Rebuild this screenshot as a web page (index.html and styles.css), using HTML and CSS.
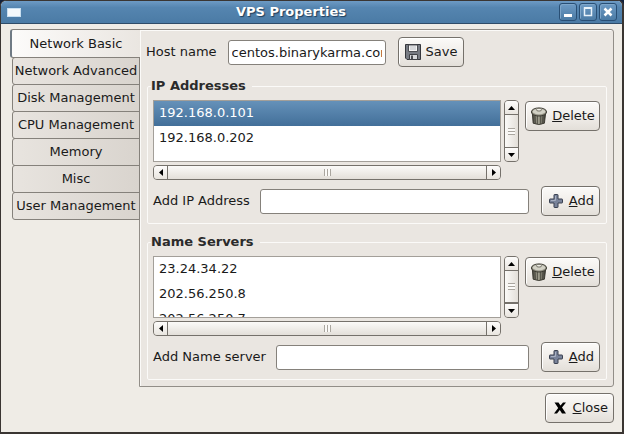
FILE: index.html
```html
<!doctype html>
<html lang="en">
<head>
    <meta charset="UTF-8">
    <meta name="viewport" content="width=device-width, initial-scale=1.0">
    <title>VPS Properties</title>
    <link rel="stylesheet" href="styles.css">
</head>
<body>

<!-- Icons used more than once -->
<svg class="icon-defs" aria-hidden="true">
    <defs>
        <linearGradient id="can" x1="0" x2="1" y1="0" y2="0">
            <stop offset="0" stop-color="#3c3b34"/>
            <stop offset=".45" stop-color="#aeac9b"/>
            <stop offset="1" stop-color="#36352e"/>
        </linearGradient>
    </defs>
    <symbol id="icon-trash" viewBox="0 0 20 20">
        <path d="M2.500 6 L3.500 18 Q10 21 16 18 L17.500 6Z" fill="url(#can)" stroke="#35342d"/>
        <path d="M5.500 9.500l.5 8.500M8.500 10v9M11.500 10v9M14.500 9.500l-.5 8.500" fill="none" stroke="#4a483f"/>
        <ellipse cx="10" cy="5.500" rx="8.500" ry="4.500" fill="#8d8b7e" stroke="#35342d"/>
        <ellipse cx="10" cy="5" rx="7" ry="3.300" fill="#d2d1c5"/>
        <ellipse cx="10" cy="3" rx="3" ry="1.500" fill="#f0efe8" stroke="#6b695d"/>
    </symbol>
    <symbol id="icon-add" viewBox="0 0 18 18">
        <path d="M7.500 2.500h3q.5 0 .5.5v4h4q.5 0 .5.500v3q0 .5-.5.500h-4v4q0 .5-.5.500h-3q-.5 0-.5-.5v-4H3q-.5 0-.5-.5v-3Q2.500 7 3 7h4V3q0-.5.5-.5z" fill="#79839a" stroke="#3a4150"/>
        <path d="M8.500 4v4.500H4" fill="none" stroke="#a9b1c2"/>
    </symbol>
    <symbol id="arrow-up" viewBox="0 0 7 4"><path d="M3.500 0L7 4H0z"/></symbol>
    <symbol id="arrow-down" viewBox="0 0 7 4"><path d="M0 0h7L3.500 4z"/></symbol>
    <symbol id="arrow-left" viewBox="0 0 4 7"><path d="M4 0v7L0 3.500z"/></symbol>
    <symbol id="arrow-right" viewBox="0 0 4 7"><path d="M0 0l4 3.500L0 7z"/></symbol>
</svg>

<div class="window">
    <header class="titlebar">
        <span class="window-icon"></span>
        <h1>VPS Properties</h1>
        <div class="window-buttons">
            <button aria-label="Minimize"><svg viewBox="0 0 16 16"><path d="M4 11.500h8" stroke="#fff" stroke-width="3"/></svg></button>
            <button aria-label="Maximize"><svg viewBox="0 0 16 16"><path d="M4.500 4h7v7.500h-7z" fill="none" stroke="#e8f2fa" stroke-width="1.500"/><path d="M4 4h8" stroke="#e8f2fa" stroke-width="2"/></svg></button>
            <button aria-label="Close window"><svg viewBox="0 0 16 16"><path d="M4.500 4.500l7 7M11.500 4.500l-7 7" stroke="#fff" stroke-width="2.500"/></svg></button>
        </div>
    </header>

    <main class="content">
        <div class="tabs" role="tablist" aria-label="Settings">
            <button class="tab active" role="tab" aria-selected="true">Network Basic</button>
            <button class="tab" role="tab">Network Advanced</button>
            <button class="tab" role="tab">Disk Management</button>
            <button class="tab" role="tab">CPU Management</button>
            <button class="tab" role="tab">Memory</button>
            <button class="tab" role="tab">Misc</button>
            <button class="tab" role="tab">User Management</button>
        </div>

        <div class="panel" role="tabpanel" aria-label="Network Basic">
            <div class="host-row">
                <label for="hostName">Host name</label>
                <input type="text" id="hostName" value="centos.binarykarma.com">
                <button class="btn">
                    <svg class="icon" viewBox="0 0 18 18">
                        <path d="M1.500 1.500h15v15H3l-1.500-1.500z" fill="#777b83" stroke="#35373c"/>
                        <path d="M4.500 2h9v6.500h-9z" fill="#f4f4f4" stroke="#4b4d52"/>
                        <path d="M6 4h6M6 6h6" stroke="#b9bcc2"/>
                        <path d="M5.500 11.500h8v5h-8z" fill="#d7d9dc" stroke="#404247"/>
                        <path d="M7 12.500h2v3.500H7z" fill="#4b4d52"/>
                    </svg>
                    <span>Save</span>
                </button>
            </div>

            <!-- IP addresses -->
            <fieldset class="group">
                <legend>IP Addresses</legend>
                <div class="list-area">
                    <select class="list" size="2" aria-label="IP Addresses">
                        <option selected>192.168.0.101</option>
                        <option>192.168.0.202</option>
                    </select>
                    <div class="scroll-v">
                        <button aria-label="Scroll up"><svg class="arrow-v"><use href="#arrow-up"/></svg></button>
                        <div class="thumb"><span class="grip"></span></div>
                        <button aria-label="Scroll down"><svg class="arrow-v"><use href="#arrow-down"/></svg></button>
                    </div>
                    <button class="btn"><svg class="icon icon-large"><use href="#icon-trash"/></svg><span><u>D</u>elete</span></button>
                    <div class="scroll-h">
                        <button aria-label="Scroll left"><svg class="arrow-h"><use href="#arrow-left"/></svg></button>
                        <div class="thumb"><span class="grip"></span></div>
                        <button aria-label="Scroll right"><svg class="arrow-h"><use href="#arrow-right"/></svg></button>
                    </div>
                </div>
                <div class="add-row">
                    <label for="addIp">Add IP Address</label>
                    <input type="text" id="addIp">
                    <button class="btn"><svg class="icon"><use href="#icon-add"/></svg><span><u>A</u>dd</span></button>
                </div>
            </fieldset>

            <!-- Name servers -->
            <fieldset class="group">
                <legend>Name Servers</legend>
                <div class="list-area">
                    <select class="list" size="2" aria-label="Name Servers">
                        <option>23.24.34.22</option>
                        <option>202.56.250.8</option>
                        <option>202.56.250.7</option>
                    </select>
                    <div class="scroll-v">
                        <button aria-label="Scroll up"><svg class="arrow-v"><use href="#arrow-up"/></svg></button>
                        <div class="thumb short"><span class="grip"></span></div>
                        <button aria-label="Scroll down"><svg class="arrow-v"><use href="#arrow-down"/></svg></button>
                    </div>
                    <button class="btn"><svg class="icon icon-large"><use href="#icon-trash"/></svg><span><u>D</u>elete</span></button>
                    <div class="scroll-h">
                        <button aria-label="Scroll left"><svg class="arrow-h"><use href="#arrow-left"/></svg></button>
                        <div class="thumb"><span class="grip"></span></div>
                        <button aria-label="Scroll right"><svg class="arrow-h"><use href="#arrow-right"/></svg></button>
                    </div>
                </div>
                <div class="add-row">
                    <label for="addServer">Add Name server</label>
                    <input type="text" id="addServer">
                    <button class="btn"><svg class="icon"><use href="#icon-add"/></svg><span><u>A</u>dd</span></button>
                </div>
            </fieldset>
        </div>
    </main>

    <footer class="actions">
        <button class="btn">
            <svg class="icon" viewBox="0 0 18 18"><path d="M3.500 3.500h4l2 3 2.500-3h3L11 8.600l4 5.900h-4l-2.200-3.500-2.800 3.500H3l4.200-5.500z" fill="#000"/></svg>
            <span><u>C</u>lose</span>
        </button>
    </footer>
</div>

</body>
</html>
```
FILE: styles.css
```css
* {
    box-sizing: border-box;
}
body {
    margin: 0;
    background-color: #10203c;
    color: #1a1a1a;
    font-family: "DejaVu Sans", sans-serif;
    font-size: 13px;
    line-height: 16px;
}
button, input, select {
    font: inherit;
    color: inherit;
    margin: 0;
}
button {
    display: flex;
    align-items: center;
    justify-content: center;
    padding: 0;
}
.icon-defs {
    position: absolute;
    width: 0;
    height: 0;
}
.window {
    display: flex;
    flex-direction: column;
    min-height: 100vh;
    border: 1px solid #3a3532;
    border-right-width: 2px;
    border-bottom-width: 2px;
    border-radius: 6px 6px 0 0;
    background-color: #efece6;
    overflow: hidden;
}

/* Title bar */
.titlebar {
    display: grid;
    grid-template-columns: 16px 1fr 60px;
    align-items: center;
    height: 23px;
    padding: 0 3px 0 6px;
    border-bottom: 1px solid #2f4c68;
    background: linear-gradient(#6d9ac4, #5585b0 30%, #4b7ba5);
}
.titlebar h1 {
    margin: 0;
    color: #fff;
    font-size: 13px;
    text-align: center;
    text-shadow: 1px 1px 1px #1f3d5a;
}
.window-icon {
    width: 14px;
    height: 9px;
    border: 1px solid #c9dff0;
    background-color: #f4f8fb;
}
.window-buttons {
    display: flex;
    gap: 2px;
}
.window-buttons button {
    width: 18px;
    height: 18px;
    border: 1px solid #294f75;
    border-radius: 3px;
    background: linear-gradient(#6d9ac4, #4b7ba5);
    box-shadow: inset 1px 1px #7ea6ca;
}
.window-buttons svg {
    width: 16px;
    height: 16px;
}

/* Tabs */
.content {
    display: flex;
    align-items: stretch;
    padding: 5px 8px 0 9px;
}
.tabs {
    flex: none;
    width: 130px;
    margin-right: -1px;
    z-index: 1;
}
.tab {
    width: 128px;
    height: 28px;
    margin: -1px 0 0 2px;
    border: 1px solid #85817b;
    border-radius: 3px 0 0 3px;
    background: linear-gradient(90deg, #e8e4df, #d9d4ce);
    white-space: nowrap;
}
.tab.active {
    width: 130px;
    height: 29px;
    margin: 0;
    border-right: 0;
    border-left: 2px solid #6f7a84;
    background: linear-gradient(90deg, #fcfbfa, #eae6e1);
}
.panel {
    flex: 1;
    min-width: 0;
    padding: 7px 6px 6px;
    border: 1px solid #928e88;
    border-radius: 0 3px 3px 0;
    background-color: #eae6e1;
    box-shadow: inset 1px 1px #fbfaf8;
}

/* Controls */
.btn {
    gap: 4px;
    height: 30px;
    padding: 0 5px;
    border: 1px solid #75716b;
    border-radius: 4px;
    background: linear-gradient(#fbfaf8, #f1eeea 50%, #e3dfd9);
    box-shadow: inset 1px 1px #fff;
    white-space: nowrap;
}
.icon {
    flex: none;
    width: 18px;
    height: 18px;
}
.icon-large {
    height: 20px;
}
input {
    min-width: 0;
    height: 25px;
    padding: 0 3px;
    border: 1px solid #85817b;
    border-radius: 3px;
    background-color: #fff;
}
.host-row {
    display: flex;
    align-items: center;
}
.host-row input {
    width: 158px;
    margin: 0 12px 0 11px;
}

/* Groups */
.group {
    min-width: 0;
    margin: 11px 0 0 1px;
    padding: 6px 6px 7px 5px;
    border: 1px solid #fbfaf8;
    border-radius: 2px;
}
.group + .group {
    margin-top: 10px;
}
.group legend {
    height: 16px;
    padding: 0 6px 0 0;
    margin-left: -2px;
    font-weight: bold;
    color: #2b2b2b;
}
.list-area {
    display: grid;
    grid-template-columns: 1fr 15px 78px;
    grid-template-rows: 62px 15px;
    column-gap: 3px;
    row-gap: 3px;
}
.list {
    width: 100%;
    height: 62px;
    padding: 0;
    border: 1px solid #a39f99;
    border-radius: 0;
    outline: 0;
    background-color: #fff;
    scrollbar-width: none;
}
.list option {
    height: 25px;
    min-height: 25px;
    padding: 4px 5px;
    line-height: 17px;
}
.list option:checked {
    background: linear-gradient(#6591b9, #426f99);
    color: #fff;
    -webkit-text-fill-color: #fff;
}
.list-area .btn {
    width: 75px;
    margin-top: 1px;
    justify-self: end;
}
.add-row {
    display: flex;
    align-items: center;
    margin-top: 6px;
}
.add-row input {
    flex: 1;
    margin: 0 12px 0 10px;
}

/* Scrollbars */
.scroll-v, .scroll-h {
    display: flex;
    border: 1px solid #75716b;
    border-radius: 4px;
    background-color: #d0cbc4;
    overflow: hidden;
}
.scroll-v {
    flex-direction: column;
}
.scroll-v button, .scroll-h button {
    flex: none;
    width: 13px;
    height: 13px;
    border: 0;
    background: linear-gradient(#fdfcfb, #e9e5df);
}
.thumb {
    display: flex;
    flex: 1;
    align-items: center;
    justify-content: center;
}
.scroll-v .thumb {
    border: solid #75716b;
    border-width: 1px 0;
    background: linear-gradient(90deg, #fbfaf8, #e3dfd9);
}
.scroll-v .short {
    margin-bottom: 1px;
    box-shadow: 0 2px #75716b;
}
.scroll-h .thumb {
    border: solid #75716b;
    border-width: 0 1px;
    background: linear-gradient(#fbfaf8, #e3dfd9);
}
.grip {
    width: 7px;
    height: 7px;
}
.scroll-v .grip {
    background: repeating-linear-gradient(#aaa69f 0 1px, #fbfaf8 1px 3px);
}
.scroll-h .grip {
    background: repeating-linear-gradient(90deg, #aaa69f 0 1px, #fbfaf8 1px 3px);
}
.arrow-v {
    width: 7px;
    height: 4px;
}
.arrow-h {
    width: 4px;
    height: 7px;
}

/* Footer */
.actions {
    display: flex;
    justify-content: flex-end;
    padding: 6px 8px 9px;
}
```
